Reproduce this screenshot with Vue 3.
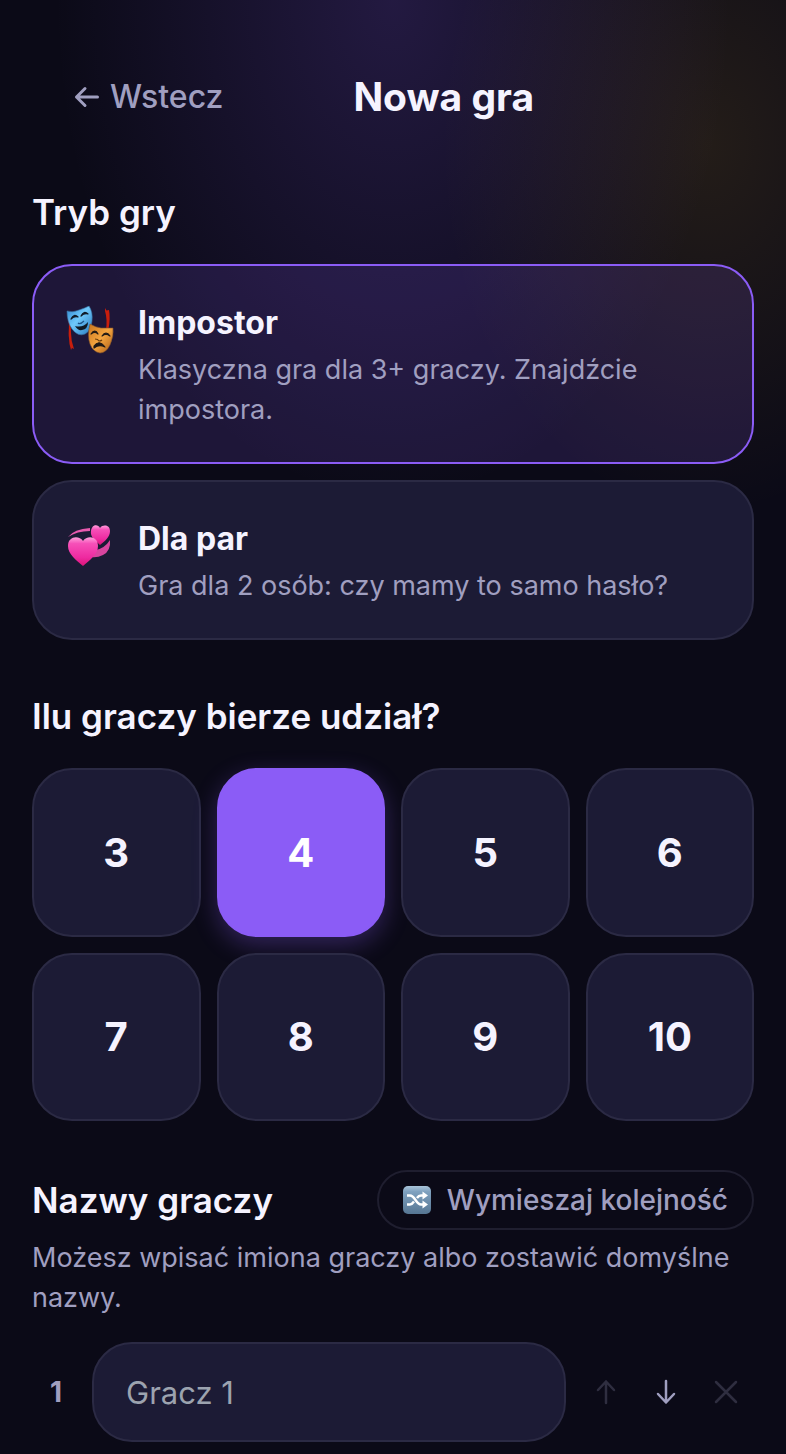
<script setup>
import { ref, computed } from 'vue'

const modes = [
  { id: 'impostor', name: 'Impostor', text: 'Klasyczna gra dla 3+ graczy. Znajdźcie impostora.' },
  { id: 'pair', name: 'Dla par', text: 'Gra dla 2 osób: czy mamy to samo hasło?' },
]
const counts = [3, 4, 5, 6, 7, 8, 9, 10]

const mode = ref('impostor')
const count = ref(4)
const names = ref([''])
const canRemove = computed(() => names.value.length > 3)
</script>

<template>
  <main class="screen">
    <header class="top">
      <button type="button" class="back">
        <svg class="back-icon" viewBox="0 0 26 24" aria-hidden="true">
          <path d="M23.500 12H2.500M11 3.500L2.500 12L11 20.500" />
        </svg>
        <span>Wstecz</span>
      </button>
      <h1>Nowa gra</h1>
      <span class="spacer"></span>
    </header>

    <section class="block first">
      <h2>Tryb gry</h2>
      <div class="modes">
        <button
          v-for="m in modes"
          :key="m.id"
          type="button"
          class="mode"
          :class="{ active: mode === m.id }"
          :aria-pressed="mode === m.id"
          @click="mode = m.id"
        >
          <svg v-if="m.id === 'impostor'" class="emoji" viewBox="0 0 48 48" aria-hidden="true">
            <defs>
              <linearGradient id="blueMask" x1="0" y1="0" x2="1" y2="1">
                <stop offset="0" stop-color="#2f86d0" />
                <stop offset=".45" stop-color="#6fc8fa" />
                <stop offset="1" stop-color="#2879be" />
              </linearGradient>
              <linearGradient id="goldMask" x1="0" y1="0" x2="1" y2="1">
                <stop offset="0" stop-color="#c8741c" />
                <stop offset=".5" stop-color="#f5a640" />
                <stop offset="1" stop-color="#a85a14" />
              </linearGradient>
            </defs>
            <path d="M2 13C4 20 2 26 3 32Q3 38 5 44L6 42L8 43Q5 35 5 27Q5 20 4 14Z" fill="#c81e0c" />
            <path d="M39 2L40.500 4.500L43 4Q44.500 12 42.500 23L40 24Q41.500 13 39 5Z" fill="#c81e0c" />
            <path d="M1 5Q7 7 13 4Q19 2 23 0Q27 6 26 15Q25 25 19 28Q12 31 6 23Q1 16 1 5Z" fill="url(#blueMask)" stroke="#3970a0" stroke-width=".6" />
            <path d="M5 13Q8 7 12 11Q8 10 5 13ZM15 10Q18 4 22 8Q18 7 15 10Z" fill="#111b28" stroke="#111b28" stroke-width="1.200" stroke-linejoin="round" />
            <path d="M12 17Q14 19 18 15" fill="none" stroke="#1d558a" stroke-width="1.200" />
            <path d="M9 20Q17 22 22 16Q22 23 16 24Q12 25 9 20Z" fill="#101a24" />
            <path d="M24 18Q29 21 35 22Q42 22 47 22Q48 30 44 39Q40 47 34 47Q27 46 24 38Q21 30 24 18Z" fill="url(#goldMask)" stroke="#80502b" stroke-width=".6" />
            <path d="M25 28Q29 22 32 28Q29 25 25 28ZM36 30Q40 24 44 30Q40 27 36 30Z" fill="#211a16" stroke="#211a16" stroke-width="1.200" stroke-linejoin="round" />
            <path d="M29 33Q32 33 33 35Q35 35 36 34" fill="none" stroke="#70400e" stroke-width="1.200" />
            <path d="M28 40Q33 33 39 41Q33 38 28 42Z" fill="#211a16" stroke="#211a16" stroke-width="1.200" stroke-linejoin="round" />
          </svg>
          <svg v-else class="emoji" viewBox="0 -3 48 48" aria-hidden="true">
            <defs>
              <linearGradient id="pinkHeart" x1="0" y1="0" x2="0" y2="1">
                <stop offset="0" stop-color="#ffa0dc" />
                <stop offset=".22" stop-color="#f650b8" />
                <stop offset=".7" stop-color="#ee2aa0" />
                <stop offset="1" stop-color="#dc1478" />
              </linearGradient>
            </defs>
            <path d="M2 12Q8 4 24 3L24 6Q11 6 2 12Z" fill="#e85aaf" />
            <path d="M44 15Q45 26 37 30Q31 33 25 32L30 25Q39 23 44 15Z" fill="#d8459f" />
            <path d="M34 20C29 15 24 12 25 6C26 -1 32 -1 34 3C37 -1 44 0 44 6C44 12 39 16 34 20Z" fill="url(#pinkHeart)" />
            <path d="M17 41C10 35 2 29 2 21C2 11 13 10 17 16C21 10 32 11 32 21C32 29 24 35 17 41Z" fill="url(#pinkHeart)" />
          </svg>
          <span class="mode-body">
            <strong>{{ m.name }}</strong>
            <span class="mode-text">{{ m.text }}</span>
          </span>
        </button>
      </div>
    </section>

    <section class="block">
      <h2>Ilu graczy bierze udział?</h2>
      <div class="counts">
        <button
          v-for="n in counts"
          :key="n"
          type="button"
          class="count"
          :class="{ active: count === n }"
          :aria-pressed="count === n"
          @click="count = n"
        >{{ n }}</button>
      </div>
    </section>

    <section class="block">
      <div class="names-head">
        <h2>Nazwy graczy</h2>
        <button type="button" class="shuffle">
          <svg class="shuffle-icon" viewBox="0 0 28 28" aria-hidden="true">
            <defs>
              <linearGradient id="tile" x1="0" y1="0" x2="0" y2="1">
                <stop offset="0" stop-color="#a9c5da" />
                <stop offset=".2" stop-color="#7fa1bf" />
                <stop offset="1" stop-color="#567693" />
              </linearGradient>
            </defs>
            <rect width="28" height="28" rx="5" fill="url(#tile)" />
            <path d="M4 9.500H7C12 9.500 13 18.500 18 18.500H20M4 18.500H7C9 18.500 10 17 11 15.500M14 12C15 10.500 16 9.500 18 9.500H20" fill="none" stroke="#fff" stroke-width="2.400" />
            <path d="M19.500 5.500L25 9.500L19.500 13.500ZM19.500 14.500L25 18.500L19.500 22.500Z" fill="#fff" />
          </svg>
          <span>Wymieszaj kolejność</span>
        </button>
      </div>
      <p class="hint">Możesz wpisać imiona graczy albo zostawić domyślne nazwy.</p>
      <ol class="players">
        <li v-for="(name, i) in names" :key="i" class="player">
          <label class="index" :for="'player-' + i">{{ i + 1 }}</label>
          <input :id="'player-' + i" v-model="names[i]" type="text" :placeholder="'Gracz ' + (i + 1)" />
          <div class="actions">
            <button type="button" class="act" aria-label="Przesuń w górę" :disabled="i === 0">
              <svg viewBox="0 0 24 28" aria-hidden="true"><path d="M12 25V3.500M4 12L12 3.500L20 12" /></svg>
            </button>
            <button type="button" class="act" aria-label="Przesuń w dół">
              <svg viewBox="0 0 24 28" aria-hidden="true"><path d="M12 3V24.500M4 16L12 24.500L20 16" /></svg>
            </button>
            <button type="button" class="act" aria-label="Usuń gracza" :disabled="!canRemove">
              <svg viewBox="0 0 24 28" aria-hidden="true"><path d="M2 4L22 24M22 4L2 24" /></svg>
            </button>
          </div>
        </li>
      </ol>
    </section>
  </main>
</template>

<style>
body {
  background: #0b0a17;
}
</style>

<style scoped>
.screen {
  box-sizing: border-box;
  min-height: 100vh;
  padding: 56px 32px 12px;
  color: #f5f3ff;
  font-family: Inter, "Liberation Sans", sans-serif;
  background:
    radial-gradient(ellipse 43% 500px at 50% 0, rgba(139, 92, 246, 0.19), transparent),
    radial-gradient(ellipse 34% 370px at 90% 145px, rgba(251, 191, 36, 0.1), transparent),
    #0b0a17;
}
button {
  margin: 0;
  border: 0;
  padding: 0;
  background: none;
  color: inherit;
  font: inherit;
  cursor: pointer;
}
.top {
  display: flex;
  align-items: center;
  justify-content: space-between;
  height: 82px;
}
.back {
  display: flex;
  align-items: center;
  gap: 10px;
  padding: 16px 42px;
  color: #a09fc0;
  font-size: 32px;
  font-weight: 500;
  line-height: 48px;
}
.back-icon {
  width: 26px;
  height: 24px;
  fill: none;
  stroke: currentColor;
  stroke-width: 3;
  stroke-linecap: round;
  stroke-linejoin: round;
}
.spacer {
  width: 132px;
}
h1 {
  margin: 0;
  font-size: 39px;
  font-weight: 700;
  line-height: 56px;
}
h2 {
  margin: 0;
  font-size: 35px;
  font-weight: 600;
  line-height: 56px;
}
.block {
  margin-top: 48px;
}
.block.first {
  margin-top: 46px;
}
.modes {
  display: grid;
  gap: 16px;
  margin-top: 24px;
}
.mode {
  display: flex;
  align-items: flex-start;
  gap: 24px;
  border: 2px solid #2b2a44;
  border-radius: 40px;
  padding: 32px;
  background: #1c1b35;
  text-align: left;
}
.mode.active {
  border-color: #8b5cf6;
  background: rgba(139, 92, 246, 0.15);
}
.emoji {
  flex: none;
  width: 48px;
  height: 48px;
  margin-top: 8px;
}
.mode-body strong,
.mode-text {
  display: block;
}
.mode-body strong {
  font-size: 32px;
  font-weight: 700;
  line-height: 50px;
}
.mode-text {
  margin-top: 2px;
  color: #a09fc0;
  font-size: 27px;
  line-height: 40px;
}
.counts {
  display: grid;
  grid-template-columns: repeat(4, 1fr);
  gap: 16px;
  margin-top: 24px;
  padding-bottom: 1px;
}
.count {
  aspect-ratio: 1;
  border: 2px solid #2b2a44;
  border-radius: 40px;
  background: #1c1b35;
  font-size: 40px;
  font-weight: 700;
}
.count.active {
  border-color: #8b5cf6;
  background: #8b5cf6;
  color: #fff;
  box-shadow: 0 8px 24px rgba(139, 92, 246, 0.3);
}
.names-head {
  display: flex;
  align-items: center;
  justify-content: space-between;
}
.shuffle {
  display: flex;
  align-items: center;
  gap: 16px;
  border: 2px solid #1f1e2f;
  border-radius: 30px;
  padding: 8px 24px;
  color: #a09fc0;
  font-size: 28px;
  font-weight: 500;
  line-height: 40px;
}
.shuffle-icon {
  width: 28px;
  height: 28px;
}
.hint {
  margin: 8px 0 24px;
  color: #a09fc0;
  font-size: 27px;
  line-height: 40px;
}
.players {
  margin: 0;
  padding: 0;
  list-style: none;
}
.player {
  display: flex;
  align-items: center;
  gap: 12px;
}
.index {
  flex: none;
  width: 48px;
  color: #a09fc0;
  font-size: 28px;
  font-weight: 700;
  text-align: center;
}
input {
  box-sizing: border-box;
  flex: 1;
  min-width: 0;
  height: 100px;
  border: 2px solid #2b2a44;
  border-radius: 40px;
  padding: 0 32px;
  background: #1c1b35;
  color: inherit;
  font-family: inherit;
  font-size: 31px;
}
input::placeholder {
  color: #9ca3af;
}
.actions {
  display: flex;
  gap: 4px;
}
.act {
  display: grid;
  place-items: center;
  width: 56px;
  height: 56px;
  color: #a09fc0;
}
.act:disabled {
  color: #2f2e40;
  cursor: default;
}
.act svg {
  width: 24px;
  height: 28px;
  fill: none;
  stroke: currentColor;
  stroke-width: 2.5;
  stroke-linecap: round;
  stroke-linejoin: round;
}
</style>
